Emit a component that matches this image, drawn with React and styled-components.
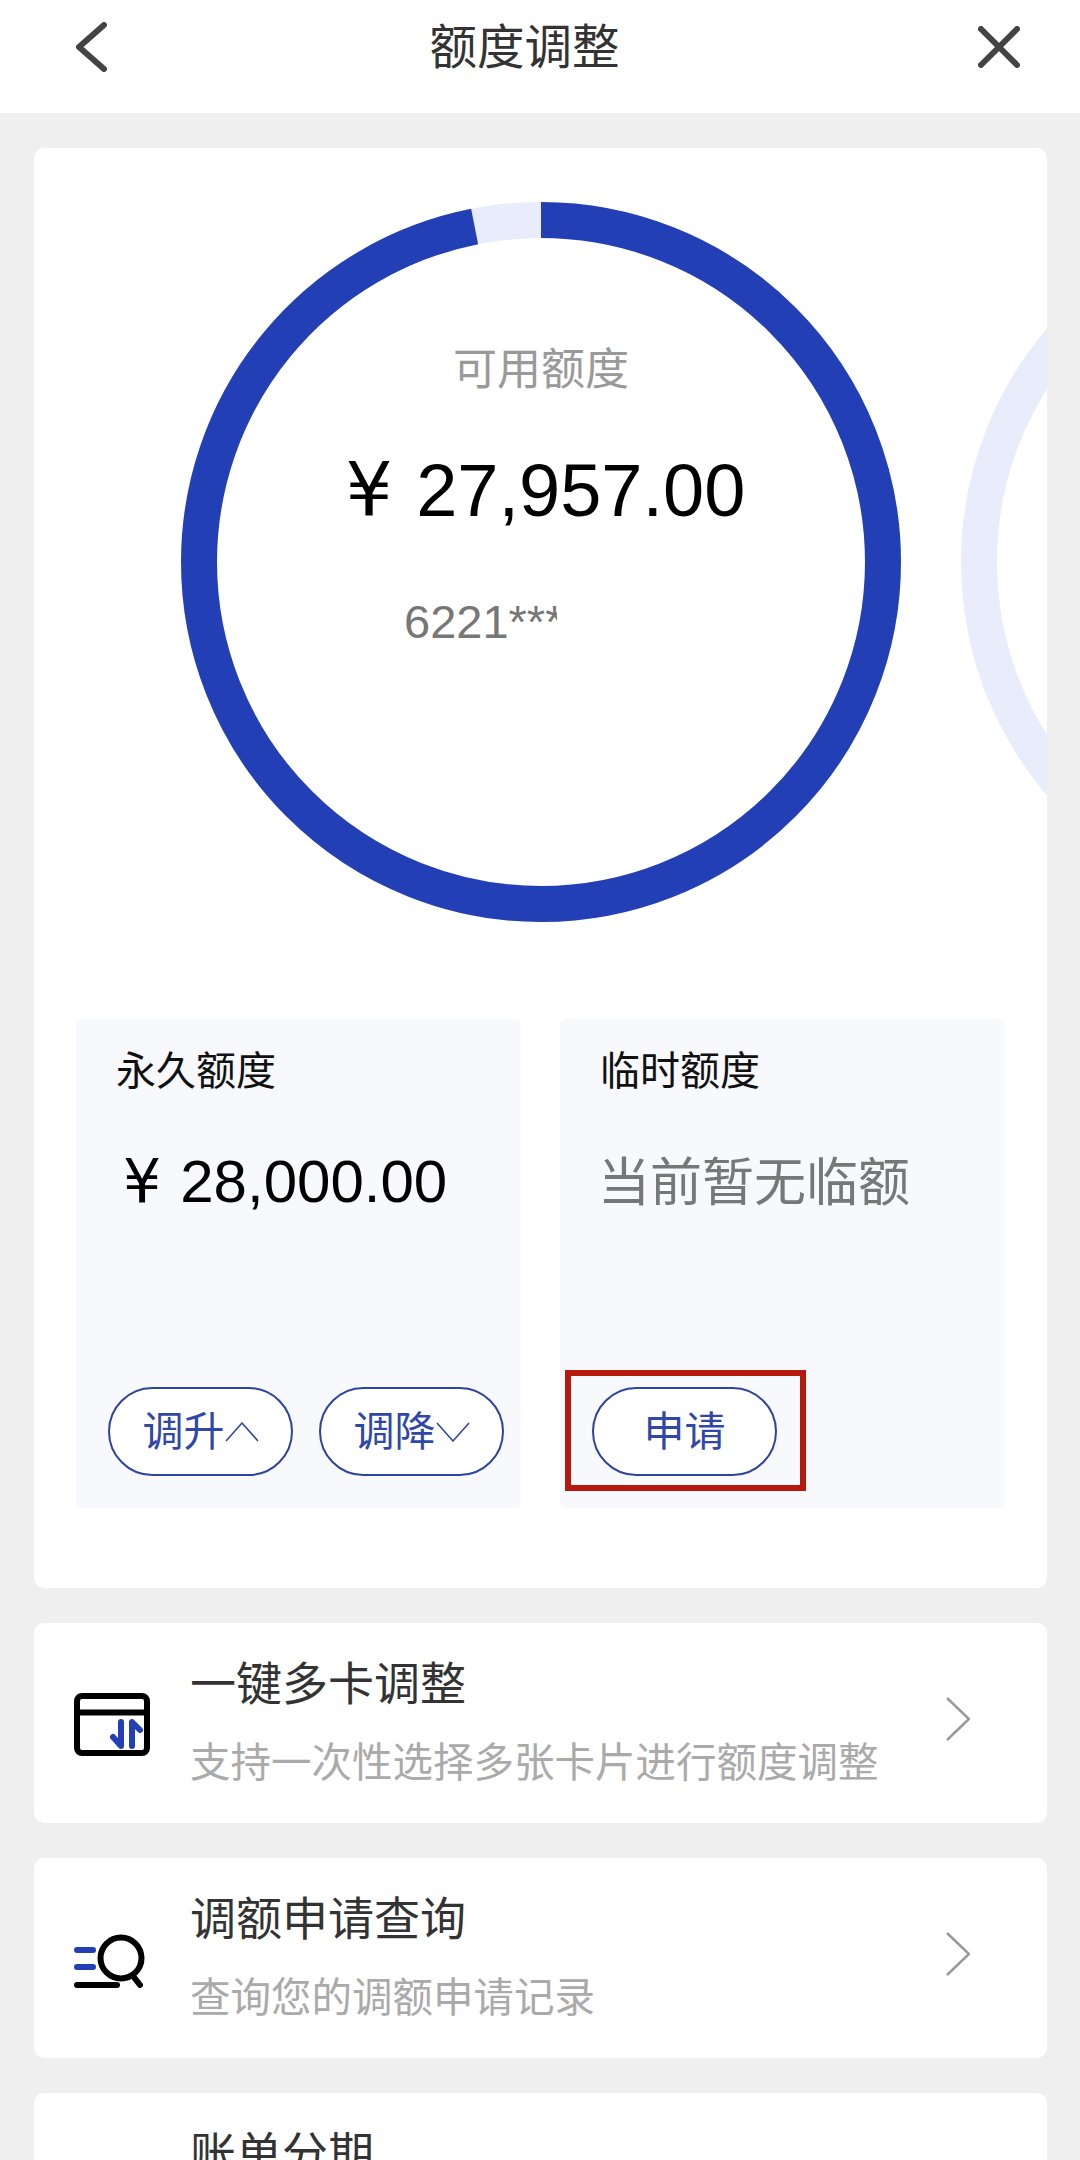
import styled, { createGlobalStyle } from "styled-components";

const BLUE = "#233fb6";
const LINE_BLUE = "#2c44a0";
const RING_BG = "#e9ecfa";
const RING_RADIUS = 342;
const RING_LENGTH = 2 * Math.PI * RING_RADIUS;

const GlobalStyle = createGlobalStyle`
  html, body {
    margin: 0;
    padding: 0;
    background: #efefef;
  }
  * {
    box-sizing: border-box;
  }
  body {
    font-family: "Liberation Sans", "Noto Sans CJK SC", sans-serif;
  }
`;

function Ring({ progress }) {
  return (
    <RingSvg viewBox="0 0 720 720">
      <circle cx="360" cy="360" r={RING_RADIUS} fill="none" stroke={RING_BG} strokeWidth="36" />
      {progress > 0 && (
        <circle
          cx="360"
          cy="360"
          r={RING_RADIUS}
          fill="none"
          stroke={BLUE}
          strokeWidth="36"
          strokeDasharray={`${progress * RING_LENGTH} ${RING_LENGTH}`}
          transform="rotate(-90 360 360)"
        />
      )}
    </RingSvg>
  );
}

function CardAdjustIcon() {
  return (
    <svg width="76" height="63" viewBox="0 0 76 63" fill="none" strokeWidth="6" strokeLinecap="round" strokeLinejoin="round">
      <rect x="3" y="3" width="70" height="57" rx="5" stroke="#000" />
      <path d="M3 19.5H73" stroke="#000" strokeLinecap="butt" />
      <path d="M47 29V53L39 44" stroke={BLUE} />
      <path d="M58 53V29L66 37" stroke={BLUE} />
    </svg>
  );
}

function QueryIcon() {
  return (
    <svg width="72" height="58" viewBox="0 0 72 58" fill="none" strokeWidth="6" strokeLinecap="round">
      <path d="M3 20H19M3 37H19" stroke={BLUE} />
      <path d="M3 55H43" stroke="#000" />
      <circle cx="47" cy="28" r="20.5" stroke="#000" />
      <path d="M59 46L66 55" stroke="#000" />
    </svg>
  );
}

export default function App() {
  return (
    <Page>
      <GlobalStyle />
      <Header>
        <HeaderIcon width="36" height="50" viewBox="0 0 36 50">
          <path d="M29 3L4 25L29 47" />
        </HeaderIcon>
        <HeaderTitle>额度调整</HeaderTitle>
        <HeaderIcon width="42" height="42" viewBox="0 0 42 42">
          <path d="M3 3L39 39M39 3L3 39" />
        </HeaderIcon>
      </Header>

      <Main>
        <QuotaCard>
          <Carousel>
            <Slide>
              <Ring progress={0.9685} />
              <RingCenter>
                <RingLabel>可用额度</RingLabel>
                <RingAmount>
                  <Currency>¥ </Currency>27,957.00
                </RingAmount>
                <RingCardNo>6221***********</RingCardNo>
              </RingCenter>
            </Slide>
            <Slide>
              <Ring progress={0} />
            </Slide>
          </Carousel>

          <Panels>
            <Panel>
              <PanelTitle>永久额度</PanelTitle>
              <PanelAmount>
                <Currency>¥ </Currency>28,000.00
              </PanelAmount>
              <PanelActions>
                <Pill>
                  调升
                  <PillChevron viewBox="0 0 34 20">
                    <path d="M1 19L17 1L33 19" />
                  </PillChevron>
                </Pill>
                <Pill>
                  调降
                  <PillChevron viewBox="0 0 34 20">
                    <path d="M1 1L17 19L33 1" />
                  </PillChevron>
                </Pill>
              </PanelActions>
            </Panel>
            <Panel>
              <PanelTitle>临时额度</PanelTitle>
              <PanelEmpty>当前暂无临额</PanelEmpty>
              <PanelActions>
                <Highlighted>
                  <Pill>申请</Pill>
                </Highlighted>
              </PanelActions>
            </Panel>
          </Panels>
        </QuotaCard>

        <Row>
          <RowIcon>
            <CardAdjustIcon />
          </RowIcon>
          <RowText>
            <RowTitle>一键多卡调整</RowTitle>
            <RowSub>支持一次性选择多张卡片进行额度调整</RowSub>
          </RowText>
          <RowChevron viewBox="0 0 24 44">
            <path d="M1 1L23 22L1 43" />
          </RowChevron>
        </Row>

        <Row>
          <RowIcon>
            <QueryIcon />
          </RowIcon>
          <RowText>
            <RowTitle>调额申请查询</RowTitle>
            <RowSub>查询您的调额申请记录</RowSub>
          </RowText>
          <RowChevron viewBox="0 0 24 44">
            <path d="M1 1L23 22L1 43" />
          </RowChevron>
        </Row>

        <Row>
          <RowIcon />
          <RowText>
            <RowTitle>账单分期</RowTitle>
          </RowText>
        </Row>
      </Main>
    </Page>
  );
}

const Page = styled.div`
  width: 1080px;
  height: 2160px;
  overflow: hidden;
  background: #efefef;
`;

const Header = styled.header`
  height: 113px;
  padding: 0 60px 19px 75px;
  background: #fff;
  display: flex;
  align-items: center;
  justify-content: space-between;
`;

const HeaderTitle = styled.h1`
  margin: 2px 40px 0 0;
  font-size: 47.5px;
  line-height: 60px;
  font-weight: 400;
  color: #333;
`;

const HeaderIcon = styled.svg`
  flex: none;
  fill: none;
  stroke: #444;
  stroke-width: 6;
  stroke-linecap: round;
  stroke-linejoin: round;
`;

const Main = styled.main`
  padding: 35px 33px 0 34px;
  display: flex;
  flex-direction: column;
  gap: 35px;
`;

const QuotaCard = styled.section`
  height: 1440px;
  padding: 54px 42px 0;
  background: #fff;
  border-radius: 10px;
  overflow: hidden;
`;

const Carousel = styled.div`
  margin: 0 -42px;
  padding-left: 147px;
  display: flex;
  gap: 60px;
`;

const Slide = styled.div`
  position: relative;
  flex: none;
  width: 720px;
  height: 721px;
`;

const RingSvg = styled.svg`
  display: block;
  width: 720px;
  height: 720px;
`;

const RingCenter = styled.div`
  position: absolute;
  inset: 0;
  padding-top: 138px;
  display: flex;
  flex-direction: column;
  align-items: center;
`;

const RingLabel = styled.div`
  font-size: 44px;
  line-height: 60px;
  color: #999;
`;

const RingAmount = styled.div`
  margin: 50px 0 0 9px;
  font-size: 74px;
  line-height: 80px;
  color: #000;
  white-space: nowrap;
`;

const Currency = styled.span`
  font-family: "DejaVu Sans", sans-serif;
  white-space: pre;
`;

const RingCardNo = styled.div`
  align-self: flex-start;
  margin: 61px 0 0 223px;
  width: 153px;
  overflow: hidden;
  white-space: nowrap;
  font-size: 47px;
  line-height: 60px;
  color: #777;
`;

const Panels = styled.div`
  margin-top: 96px;
  display: grid;
  grid-template-columns: 445px 445px;
  gap: 39px;
`;

const Panel = styled.div`
  height: 489px;
  padding: 28px 18px 32px 32px;
  background: #f7f9fd;
  border-radius: 6px;
  display: flex;
  flex-direction: column;
`;

const PanelTitle = styled.div`
  margin-left: 8px;
  font-size: 40px;
  line-height: 48px;
  color: #111;
`;

const PanelAmount = styled.div`
  margin: 51px 0 0 15px;
  font-size: 60px;
  line-height: 70px;
  color: #000;
  white-space: nowrap;
`;

const PanelEmpty = styled.div`
  margin: 53px 0 0 6px;
  font-size: 52px;
  line-height: 70px;
  color: #777;
  white-space: nowrap;
`;

const PanelActions = styled.div`
  margin-top: auto;
  display: flex;
  gap: 26px;
`;

const Pill = styled.button`
  flex: none;
  width: 185px;
  height: 89px;
  padding: 0 0 7px;
  border: 2px solid ${LINE_BLUE};
  border-radius: 45px;
  background: #fff;
  color: #2f47a8;
  font-family: inherit;
  font-size: 41px;
  display: flex;
  align-items: center;
  justify-content: center;
`;

const PillChevron = styled.svg`
  width: 34px;
  height: 20px;
  margin-top: 7px;
  fill: none;
  stroke: ${LINE_BLUE};
  stroke-width: 1.5;
`;

const Highlighted = styled.div`
  position: relative;
  &::after {
    content: "";
    position: absolute;
    top: -17px;
    bottom: -15px;
    left: -27px;
    right: -29px;
    border: 6px solid #b8190f;
    pointer-events: none;
  }
`;

const Row = styled.section`
  flex: none;
  height: 200px;
  padding: 0 77px 0 40px;
  background: #fff;
  border-radius: 10px;
  display: flex;
  align-items: center;
`;

const RowIcon = styled.div`
  flex: none;
  width: 116px;
  display: flex;
  padding-top: 2px;
`;

const RowText = styled.div`
  flex: 1;
  height: 139px;
  display: flex;
  flex-direction: column;
  gap: 19px;
`;

const RowTitle = styled.div`
  font-size: 46px;
  line-height: 60px;
  color: #333;
`;

const RowSub = styled.div`
  font-size: 40.5px;
  line-height: 60px;
  color: #aaa;
  white-space: nowrap;
`;

const RowChevron = styled.svg`
  flex: none;
  width: 24px;
  height: 44px;
  margin-bottom: 8px;
  fill: none;
  stroke: #999;
  stroke-width: 2.5;
`;
